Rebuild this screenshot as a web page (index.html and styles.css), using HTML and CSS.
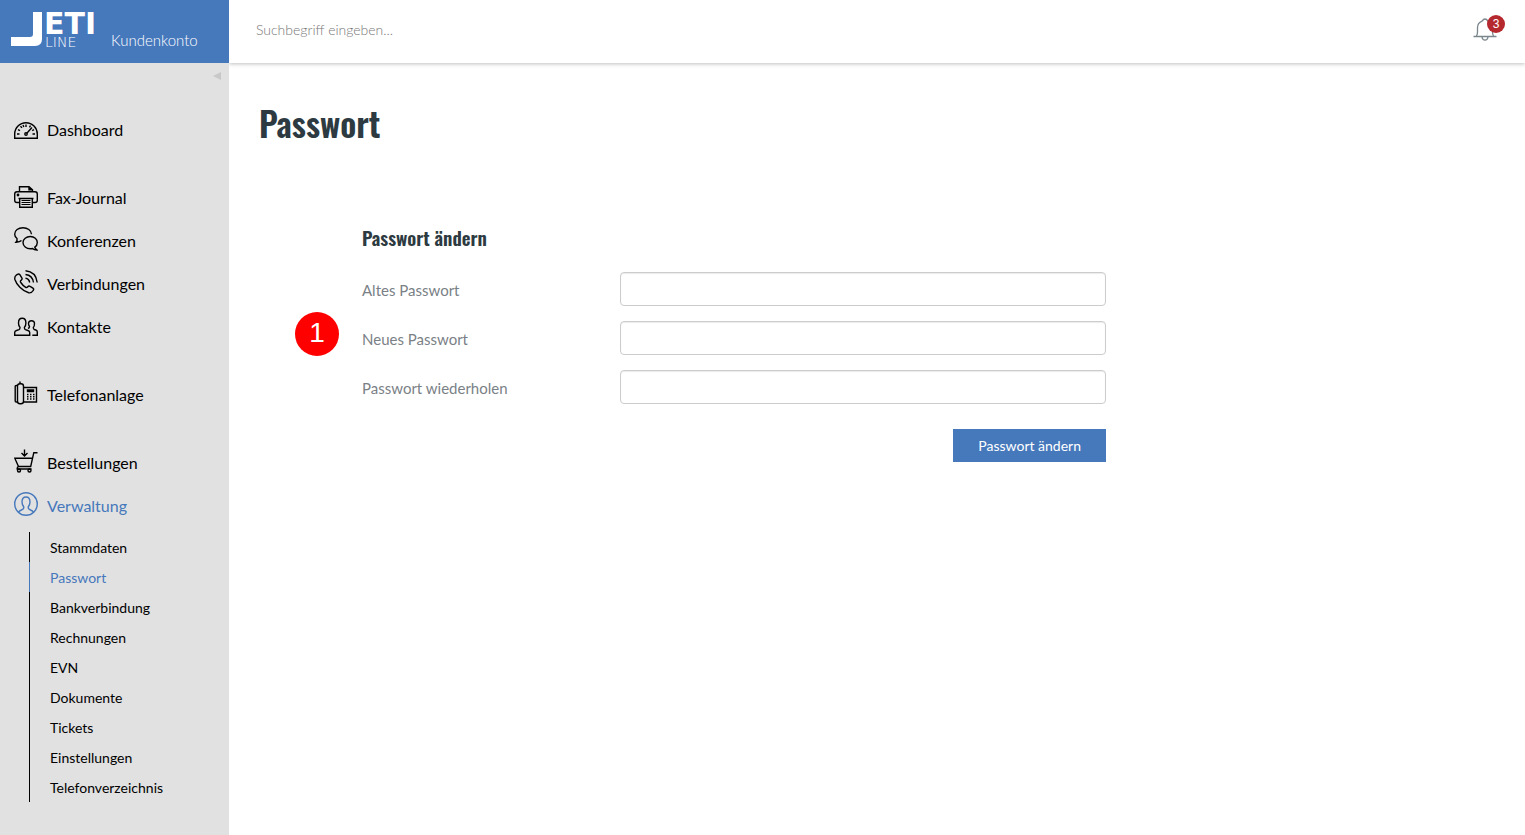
FILE: index.html
```html
<!DOCTYPE html>
<html lang="de">
<head>
  <meta charset="UTF-8" />
  <meta name="viewport" content="width=device-width, initial-scale=1.0" />
  <title>Passwort - Kundenkonto</title>
  <link rel="stylesheet" href="styles.css">
</head>
<body>
  <div class="layout">
    <aside class="sidebar">
      <a class="brand" href="#">
        <svg class="logo" viewBox="0 0 90 36" role="img" aria-label="JETI LINE">
          <path d="M22 0h9v27q0 7-7 7H0v-9h19q3 0 3-3z" fill="#fff" />
          <text class="logo-top" x="33" y="22">ETI</text>
          <text class="logo-bottom" x="34" y="35">LINE</text>
        </svg>
        <span>Kundenkonto</span>
      </a>
      <button class="toggle" type="button" aria-label="Menü einklappen"></button>

      <nav>
        <ul class="menu">
          <li class="group-end">
            <a href="#">
              <svg class="icon" viewBox="0 0 24 24">
                <path d="M.7 22.300V18A11.300 11.300 0 0 1 23.300 18v4.300z" />
                <path d="M3 18h2.500M18.500 18h2.500M4 13.700l2 1M6.500 10.200l1.500 1.700M12 8.500V11M16.500 9.500L15.500 11.300M20 13.700l-1.800.9M9 9l.8 2" />
                <path d="M12.800 17.200L18 11.500" />
                <circle cx="12" cy="18" r="1.200" />
              </svg>
              Dashboard
            </a>
          </li>
          <li>
            <a href="#">
              <svg class="icon" viewBox="0 0 24 24">
                <path d="M5.500 7.500V2.700h9.500l3.500 3v1.800M15 2.700v3h3.500" />
                <path d="M5.500 18.500H3q-2.300 0-2.300-2.300V10Q.7 7.700 3 7.700h18q2.300 0 2.300 2.300v6.200q0 2.300-2.300 2.300h-2.500" />
                <path d="M5.700 14.500h12.600v8.800H5.700zM4.500 14.500h15" />
                <path class="thin" d="M7.500 16.500h9M7.500 18.500h9M7.500 20.500h9" />
                <circle cx="4" cy="11" r=".7" />
              </svg>
              Fax-Journal
            </a>
          </li>
          <li>
            <a href="#">
              <svg class="icon" viewBox="0 0 24 24">
                <path d="M7.500 13.500q-1.500 1.500-5.500 1.700 1.500-1.700 1-3.700Q.7 9.800.7 7.200C.7 3.500 4.300.7 9 .7c4.500 0 8.200 2.800 8.500 6.500" />
                <path d="M20.800 20.200q2.500-1.700 2.500-4.700c0-3.500-3-6-7-6s-7.300 2.500-7.300 6 3.300 6.300 7.300 6.300q1.200 0 2.200-.3 1.500 1.500 4.500 1.500-1.700-1.300-2.200-2.800z" />
              </svg>
              Konferenzen
            </a>
          </li>
          <li>
            <a href="#">
              <svg class="icon" viewBox="0 0 24 24">
                <path d="M2.200 5.200l1.300-.9q1.500-.9 2.500.6l1.800 2.900q.8 1.400-.5 2.300-1.500 1-.5 2.400 2 3 4.600 4.700 1.300.9 2.400-.5 1-1.300 2.300-.4l2.800 1.800q1.300 1 .3 2.400-1.800 2.900-4.500 2.300C8 21 2.500 14.500.9 9.500Q.3 6.700 2.200 5.200z" />
                <path d="M11.500 8.300q3.500.4 4.200 4.200M11.500 4.500q7 .8 8 8M11.500.8q10.500 1 11.700 11.700" />
              </svg>
              Verbindungen
            </a>
          </li>
          <li class="group-end">
            <a href="#">
              <svg class="icon" viewBox="0 0 24 24">
                <path d="M.7 22.300v-2.800q0-1.500 1.800-2l2.500-.9q1-.5 1-2.200-1.500-1.700-1.500-4.500 0-4.700 3.700-4.700t3.700 4.700q0 2.800-1.500 4.500 0 1.700 1 2.200l2.500.9q1.800.5 1.800 2v2.800z" />
                <path d="M14 15.500q1.500-.5 1.500-2-1-1.500-1-3 0-2.800 3-2.800t3 2.800-1.200 4q0 1.500 1 2l1.500.5q1.500.5 1.500 2v3.300h-5" />
              </svg>
              Kontakte
            </a>
          </li>
          <li class="group-end">
            <a href="#">
              <svg class="icon" viewBox="0 0 24 24">
                <path d="M3.500 4.500H2.200q-1 0-1 1v14.500q0 1 1 1h1.300M9.500 6.500h13v14.500h-13M6 .5v2" />
                <rect x="3.500" y="2.800" width="6" height="20" rx="2.500" />
                <path d="M13.500 9h6v1.500h-6z" />
                <path d="M13 13.500h1.500M16 13.500h1.500M19 13.500h1.500M13 15.800h1.500M16 15.800h1.500M19 15.800h1.500M13 18h1.500M16 18h1.500M19 18h1.500" />
              </svg>
              Telefonanlage
            </a>
          </li>
          <li>
            <a href="#">
              <svg class="icon" viewBox="0 0 24 24">
                <path d="M23.500 3.700h-3.700L16.700 17.500H4.500L.8 9.200h17.500M4.500 17.500q-1.500.5-1.300 2.500h14.300M10.500.5v6.300M7.500 4l3 3 3-3" />
                <circle cx="5" cy="21.500" r="1.500" />
                <circle cx="15.500" cy="21.500" r="1.500" />
              </svg>
              Bestellungen
            </a>
          </li>
          <li>
            <a class="active" href="#">
              <svg class="icon" viewBox="0 0 24 24">
                <circle cx="12" cy="12" r="11.300" />
                <path d="M4.500 20.200q1-1.500 3-2.200 2.500-.8 2.300-3Q8 13 8 10q0-5 4-5t4 5q0 3-1.800 5-.2 2.200 2.300 3 2 .7 3 2.200" />
              </svg>
              Verwaltung
            </a>
            <ul class="submenu">
              <li><a href="#">Stammdaten</a></li>
              <li><a class="active" href="#">Passwort</a></li>
              <li><a href="#">Bankverbindung</a></li>
              <li><a href="#">Rechnungen</a></li>
              <li><a href="#">EVN</a></li>
              <li><a href="#">Dokumente</a></li>
              <li><a href="#">Tickets</a></li>
              <li><a href="#">Einstellungen</a></li>
              <li><a href="#">Telefonverzeichnis</a></li>
            </ul>
          </li>
        </ul>
      </nav>
    </aside>

    <div class="page">
      <header class="topbar">
        <input class="search" type="search" placeholder="Suchbegriff eingeben..." aria-label="Suchbegriff" />
        <button class="bell" type="button" aria-label="Benachrichtigungen">
          <svg viewBox="0 0 24 24">
            <path d="M.5 18.500h23M3.500 18q1-1.500 1-4v-4q0-5 4.500-6.800Q10.500 1 12 1t3 2.200Q19.500 5 19.500 10v4q0 2.500 1 4M9 19q.5 3.200 3 3.200t3-3.200" />
          </svg>
          <span class="badge">3</span>
        </button>
      </header>

      <main class="content">
        <h1>Passwort</h1>
        <form class="password-form">
          <h2>Passwort ändern</h2>
          <div class="row">
            <label for="oldPassword">Altes Passwort</label>
            <input type="password" id="oldPassword" name="oldPassword" />
          </div>
          <div class="row">
            <label for="newPassword">Neues Passwort</label>
            <input type="password" id="newPassword" name="newPassword" />
          </div>
          <div class="row">
            <label for="repeatPassword">Passwort wiederholen</label>
            <input type="password" id="repeatPassword" name="repeatPassword" />
          </div>
          <button class="submit" type="submit">Passwort ändern</button>
          <span class="marker">1</span>
        </form>
      </main>
    </div>
  </div>
</body>
</html>
```
FILE: styles.css
```css
* {
  box-sizing: border-box;
}
body {
  margin: 0;
  font-family: Lato, sans-serif;
  font-size: 16px;
  color: #000;
  background-color: #fff;
}
ul {
  list-style: none;
  margin: 0;
  padding: 0;
}
a {
  color: inherit;
  text-decoration: none;
}
button {
  border: none;
  cursor: pointer;
  font-family: inherit;
}
.layout {
  display: flex;
  min-height: 100vh;
}

/* sidebar */
.sidebar {
  position: relative;
  z-index: 1;
  flex: 0 0 229px;
  background-color: #e1e1e1;
}
.brand {
  display: flex;
  align-items: flex-end;
  gap: 10px;
  height: 63px;
  padding: 0 11px 15px;
  background-color: #4678bc;
  color: #fff;
  font-size: 15px;
  font-weight: 300;
  line-height: 16px;
}
.logo {
  width: 90px;
  height: 36px;
  overflow: visible;
}
.logo text {
  fill: #fff;
  font-family: "DejaVu Sans", sans-serif;
}
.logo .logo-top {
  font-size: 30px;
  font-weight: bold;
}
.logo .logo-bottom {
  font-size: 14px;
}
.toggle {
  display: block;
  width: 8px;
  height: 8px;
  margin: 9px 8px 28px auto;
  padding: 0;
  background-color: #c8c8c8;
  clip-path: polygon(100% 0, 100% 100%, 0 50%);
}
.menu a {
  display: flex;
  align-items: center;
  gap: 9px;
  height: 43px;
  padding-left: 14px;
}
.menu .group-end {
  margin-bottom: 25px;
}
.menu .active {
  color: #4678bc;
}
.icon {
  width: 24px;
  height: 24px;
  margin-bottom: 4px;
  fill: none;
  stroke: currentColor;
  stroke-width: 1.4;
}
.icon .thin {
  stroke-width: 1;
}
.submenu {
  margin: 5px 0 33px 29px;
  font-size: 14px;
}
.submenu a {
  height: 30px;
  padding-left: 20px;
  border-left: 1px solid #000;
}
.submenu .active {
  border-color: #4678bc;
}

/* top bar */
.page {
  flex: 1;
  min-width: 0;
}
.topbar {
  display: flex;
  justify-content: space-between;
  align-items: center;
  height: 63px;
  padding: 0 28px 4px 27px;
  box-shadow: 0 1px 4px rgba(0, 0, 0, 0.25);
}
.search {
  width: 300px;
  padding: 0;
  border: none;
  outline: none;
  font-family: inherit;
  font-size: 14px;
  font-weight: 300;
}
.search::placeholder {
  color: #777;
}
.bell {
  position: relative;
  width: 24px;
  height: 24px;
  padding: 0;
  background: none;
}
.bell svg {
  display: block;
  fill: none;
  stroke: #7a868c;
  stroke-width: 1.3;
}
.badge {
  position: absolute;
  top: -3px;
  right: -8px;
  width: 18px;
  height: 18px;
  border-radius: 50%;
  background-color: #b5282d;
  color: #fff;
  font-family: "Liberation Sans", sans-serif;
  font-size: 12px;
  line-height: 18px;
}

/* content */
.content {
  padding: 30px;
}
h1, h2 {
  margin: 0;
  font-family: Oswald, sans-serif;
  font-weight: 600;
  color: #2d3a41;
}
h1 {
  font-size: 34px;
  line-height: 60px;
}
h2 {
  margin-bottom: 21px;
  font-size: 19px;
  line-height: 28px;
}
.password-form {
  position: relative;
  max-width: 744px;
  margin: 70px 0 0 calc(100% / 12);
}
.row {
  display: grid;
  grid-template-columns: 258px 1fr;
  align-items: center;
  margin-bottom: 15px;
}
.row label {
  padding-top: 2px;
  font-size: 15px;
  color: #7a8186;
}
.row input {
  width: 100%;
  height: 34px;
  padding: 6px 12px;
  border: 1px solid #ccc;
  border-radius: 4px;
  box-shadow: inset 0 1px 1px rgba(0, 0, 0, 0.08);
}
.submit {
  display: block;
  height: 33px;
  margin: 25px 0 0 auto;
  padding: 0 25px;
  background-color: #4678bc;
  color: #fff;
  font-size: 14px;
}
.marker {
  position: absolute;
  top: 89px;
  left: -67px;
  width: 44px;
  height: 44px;
  border-radius: 50%;
  background-color: #f00;
  color: #fff;
  font-family: "Liberation Sans", sans-serif;
  font-size: 28px;
  line-height: 42px;
  text-align: center;
}
```
